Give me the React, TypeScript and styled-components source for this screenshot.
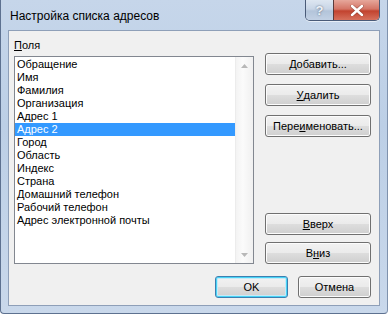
import { FC, ReactNode } from "react";
import styled, { createGlobalStyle } from "styled-components";

const GlobalStyle = createGlobalStyle`
  html, body {
    margin: 0;
    padding: 0;
    background: #ffffff;
  }
  body {
    font-family: "Liberation Sans", Arial, sans-serif;
    font-size: 11px;
    color: #000000;
  }
`;

const Window = styled.div`
  width: 388px;
  height: 314px;
  box-sizing: border-box;
  display: flex;
  flex-direction: column;
  padding: 0 7px 7px 7px;
  border-left: 1px solid #5d7190;
  border-bottom: 1px solid #5d7190;
  border-right: 1px solid #7f92ad;
  border-radius: 0 0 4px 4px;
  background: linear-gradient(180deg, #c6d6ea 0%, #bccfe6 40%, #c9d8eb 100%);
`;

const TitleBar = styled.div`
  height: 30px;
  display: flex;
  align-items: flex-start;
  justify-content: space-between;
`;

const Title = styled.div`
  font-size: 12px;
  line-height: 14px;
  padding: 9px 0 0 2px;
  color: #000000;
`;

const CaptionGroup = styled.div`
  display: flex;
  margin-right: 0;
  height: 20px;
  border: 1px solid #4a5b78;
  border-top: none;
  border-radius: 0 0 5px 5px;
  overflow: hidden;
  box-shadow: 0 1px 0 rgba(255, 255, 255, 0.6);
`;

const CaptionButton = styled.div<{ $close?: boolean }>`
  width: ${(p) => (p.$close ? "45px" : "27px")};
  height: 20px;
  display: flex;
  align-items: center;
  justify-content: center;
  font-size: 13px;
  font-weight: bold;
  color: #eef2f7;
  text-shadow: 0 0 2px #4b5a70;
  border-left: ${(p) => (p.$close ? "1px solid #5a3b3b" : "none")};
  background: ${(p) =>
    p.$close
      ? "linear-gradient(180deg, #e6a79b 0%, #d47566 45%, #c2432f 55%, #d6705c 100%)"
      : "linear-gradient(180deg, #dde6f1 0%, #c8d5e6 45%, #b3c4da 55%, #c2d1e4 100%)"};
`;

const Client = styled.div`
  flex: 1;
  display: flex;
  flex-direction: column;
  border: 1px solid #8e9fb8;
  background: #f0f0f0;
  padding: 8px 8px 6px 5px;
`;

const Body = styled.div`
  display: flex;
  gap: 11px;
`;

const LeftCol = styled.div`
  display: flex;
  flex-direction: column;
  width: 240px;
`;

const Label = styled.div`
  line-height: 13px;
  margin-bottom: 4px;
  padding-left: 0;
`;

const Acc = styled.span`
  text-decoration: underline;
`;

const ListBox = styled.div`
  height: 208px;
  box-sizing: border-box;
  border: 1px solid #828790;
  background: #ffffff;
  display: flex;
`;

const Items = styled.div`
  flex: 1;
  padding-top: 1px;
`;

const Item = styled.div<{ $selected?: boolean }>`
  height: 13px;
  line-height: 13px;
  padding-left: 2px;
  white-space: nowrap;
  background: ${(p) => (p.$selected ? "#3399ff" : "transparent")};
  color: ${(p) => (p.$selected ? "#ffffff" : "#000000")};
`;

const ScrollBar = styled.div`
  width: 17px;
  display: flex;
  flex-direction: column;
  justify-content: space-between;
  align-items: center;
  background: linear-gradient(90deg, #f3f3f3 0%, #fbfbfb 40%, #f0f0f0 100%);
  border-left: 1px solid #ececec;
`;

const ArrowBox = styled.div`
  width: 17px;
  height: 17px;
  display: flex;
  align-items: center;
  justify-content: center;
`;

const RightCol = styled.div`
  flex: 1;
  display: flex;
  flex-direction: column;
  justify-content: space-between;
  padding-top: 14px;
`;

const ButtonGroup = styled.div<{ $gap: number }>`
  display: flex;
  flex-direction: column;
  gap: ${(p) => p.$gap}px;
`;

const Button = styled.div<{ $default?: boolean; $width?: number }>`
  height: 22px;
  width: ${(p) => (p.$width ? `${p.$width}px` : "auto")};
  box-sizing: border-box;
  display: flex;
  align-items: center;
  justify-content: center;
  border-radius: 3px;
  border: 1px solid ${(p) => (p.$default ? "#3c7fb1" : "#707070")};
  background: linear-gradient(180deg, #f2f2f2 0%, #ebebeb 48%, #dddddd 52%, #cfcfcf 100%);
  box-shadow: ${(p) =>
    p.$default
      ? "inset 0 0 0 1px #48d4f6, inset 0 0 0 2px #c6eaf8"
      : "inset 0 0 0 1px #fcfcfc"};
  white-space: nowrap;
`;

const Footer = styled.div`
  display: flex;
  justify-content: flex-end;
  gap: 10px;
  margin-top: 12px;
  padding-right: 0;
`;

const fields = [
  "Обращение",
  "Имя",
  "Фамилия",
  "Организация",
  "Адрес 1",
  "Адрес 2",
  "Город",
  "Область",
  "Индекс",
  "Страна",
  "Домашний телефон",
  "Рабочий телефон",
  "Адрес электронной почты",
];

const Arrow: FC<{ down?: boolean }> = ({ down }) => (
  <ArrowBox>
    <svg width="7" height="4" viewBox="0 0 7 4">
      <path
        d={down ? "M0 0 H7 L3.5 4 Z" : "M0 4 H7 L3.5 0 Z"}
        fill="#b8b8b8"
      />
    </svg>
  </ArrowBox>
);

const CloseGlyph = () => (
  <svg width="14" height="11" viewBox="0 0 14 11">
    <path
      d="M2 1 L12 10 M12 1 L2 10"
      stroke="#5a2a22"
      strokeWidth="4"
      strokeLinecap="round"
      opacity="0.35"
    />
    <path
      d="M2 1 L12 10 M12 1 L2 10"
      stroke="#ffffff"
      strokeWidth="2.4"
      strokeLinecap="round"
    />
  </svg>
);

const Btn: FC<{ children: ReactNode; $default?: boolean; $width?: number }> = ({
  children,
  ...rest
}) => <Button {...rest}>{children}</Button>;

export default function App() {
  return (
    <>
      <GlobalStyle />
      <Window>
        <TitleBar>
          <Title>Настройка списка адресов</Title>
          <CaptionGroup>
            <CaptionButton>?</CaptionButton>
            <CaptionButton $close>
              <CloseGlyph />
            </CaptionButton>
          </CaptionGroup>
        </TitleBar>
        <Client>
          <Body>
            <LeftCol>
              <Label>
                <Acc>П</Acc>оля
              </Label>
              <ListBox>
                <Items>
                  {fields.map((f) => (
                    <Item key={f} $selected={f === "Адрес 2"}>
                      {f}
                    </Item>
                  ))}
                </Items>
                <ScrollBar>
                  <Arrow />
                  <Arrow down />
                </ScrollBar>
              </ListBox>
            </LeftCol>
            <RightCol>
              <ButtonGroup $gap={9}>
                <Btn>
                  <Acc>Д</Acc>обавить...
                </Btn>
                <Btn>
                  <Acc>У</Acc>далить
                </Btn>
                <Btn>
                  Пере<Acc>и</Acc>меновать...
                </Btn>
              </ButtonGroup>
              <ButtonGroup $gap={7}>
                <Btn>
                  <Acc>В</Acc>верх
                </Btn>
                <Btn>
                  В<Acc>н</Acc>из
                </Btn>
              </ButtonGroup>
            </RightCol>
          </Body>
          <Footer>
            <Btn $default $width={73}>
              OK
            </Btn>
            <Btn $width={73}>Отмена</Btn>
          </Footer>
        </Client>
      </Window>
    </>
  );
}
